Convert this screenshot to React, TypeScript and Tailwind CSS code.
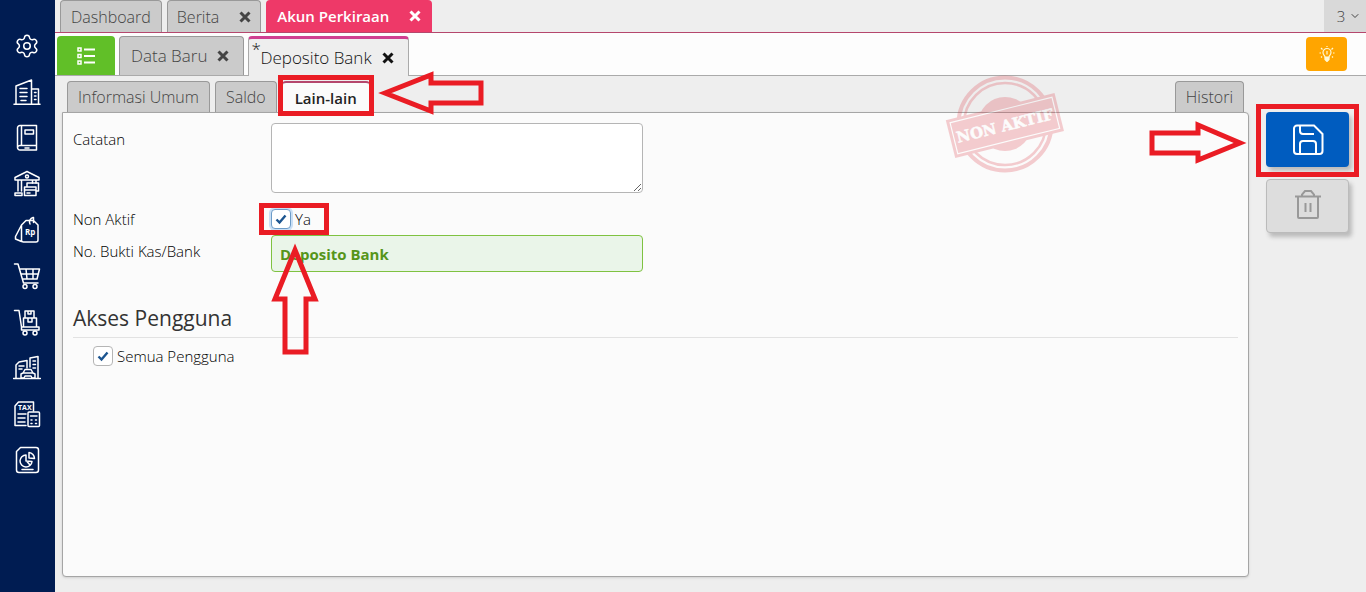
import React, { useState } from 'react';
import { ChevronDown, Settings } from 'lucide-react';

interface IconProps {
  children: React.ReactNode;
}

const MenuIcon: React.FC<IconProps> = ({ children }) => (
  <svg
    viewBox="0 0 28 28"
    className="w-7 h-7"
    fill="none"
    stroke="currentColor"
    strokeWidth="1.5"
    strokeLinecap="round"
    strokeLinejoin="round"
    aria-hidden="true"
  >
    {children}
  </svg>
);

const menuItems = [
  {
    label: 'Pengaturan',
    icon: <Settings className="w-7 h-7 p-px" strokeWidth={1.4} />,
  },
  {
    label: 'Perusahaan',
    icon: (
      <MenuIcon>
        <path d="M3 26V8l15.500-6V26M18.500 11H25.500V26M1 26.200H27" />
        <path d="M7 10.500h7M7 14.500h7M7 18.500h7M8 22.500h5M21.500 14.500h1.500M21.500 18h1.500M21.500 21.500h1.500" />
      </MenuIcon>
    ),
  },
  {
    label: 'Buku Besar',
    icon: (
      <MenuIcon>
        <path d="M7 1.500H23.500V26H7a2.500 2.500 0 0 1-2.500-2.500V4A2.500 2.500 0 0 1 7 1.500ZM4.500 23.500A2.500 2.500 0 0 1 7 21.500H23.500M8.500 2V21" />
        <path d="M12 6h8.500v4H12ZM12 24h4" />
      </MenuIcon>
    ),
  },
  {
    label: 'Kas & Bank',
    icon: (
      <MenuIcon>
        <path d="M2 7.500 14 1.500l12 6V10H2ZM5 10V21M8.500 10V21M19.500 10v3M23 10v3M2 25.500v-2.500h7v2.500Z" />
        <circle cx="14" cy="6.500" r="1.500" />
        <path d="M14 16v-3h11.500v8H24M11.500 17H23v8.500H11.500ZM11.500 20H23M14 23h3" />
      </MenuIcon>
    ),
  },
  {
    label: 'Penjualan',
    icon: (
      <MenuIcon>
        <path d="M13 4.500 8.500 9v15a2 2 0 0 0 2 2H23a2 2 0 0 0 2-2V9l-4.500-4.500ZM8.500 9 2.500 20.500v2.500l6 2.500M17 8c-1.500-3 .5-6 3-6.500M20.500 1.500v5" />
        <text x="12" y="18.500" fill="currentColor" stroke="none" className="text-[8px] font-bold">Rp</text>
      </MenuIcon>
    ),
  },
  {
    label: 'Pembelian',
    icon: (
      <MenuIcon>
        <path d="M1.500 2H5l5.500 19H25M6.500 7H26.500L24 17H9.500M8 12h17.500M13 7l1 10M20 7v10" />
        <circle cx="12" cy="24.500" r="2" />
        <circle cx="22" cy="24.500" r="2" />
      </MenuIcon>
    ),
  },
  {
    label: 'Persediaan',
    icon: (
      <MenuIcon>
        <path d="M1.500 2.500H6L8.500 19H26v3H8.500V19M12 3h9v7h-9ZM15 3v3h3V3M10.500 10h13v9h-13ZM15 10v4h4v-4" />
        <circle cx="12" cy="25" r="2" />
        <circle cx="22" cy="25" r="2" />
      </MenuIcon>
    ),
  },
  {
    label: 'Aset Tetap',
    icon: (
      <MenuIcon>
        <path d="M0.500 24.500h27M3 24V11l3-3 8-1.500V14M17 13V4l8-1.500V24M6 12h5M6 15h3M20 7h2.500M20 10.500h2.500M20 14h2.500" />
        <path d="M8 24v-4l2-1 2-3.500h6l2 3.500 2 1v4h-3l-1-2h-6l-1 2ZM11 19h8" />
      </MenuIcon>
    ),
  },
  {
    label: 'Pajak',
    icon: (
      <MenuIcon>
        <path d="M13 25.500H2V6L5.500 2H20.500V11M5 14h8M5 18h7M5 22h7" />
        <path d="M16 12h9.500a1 1 0 0 1 1 1V25.500a1 1 0 0 1-1 1H16a1 1 0 0 1-1-1V13a1 1 0 0 1 1-1ZM17.500 16H24M18 20h1M22.500 20h1M18 23.500h1M22.500 23.500h1" />
        <text x="5" y="10" fill="currentColor" stroke="none" className="text-[7px] font-bold">TAX</text>
      </MenuIcon>
    ),
  },
  {
    label: 'Laporan',
    icon: (
      <MenuIcon>
        <path d="M7.500 1.500H23A2.500 2.500 0 0 1 25.500 4V24a2.500 2.500 0 0 1-2.500 2.500H6A2.500 2.500 0 0 1 3.500 24V5.500Z" />
        <path d="M13 9a6 6 0 1 0 6 6.500l-6-.5ZM16 6.500V12l5.500.5A6 6 0 0 0 16 6.500ZM13.500 15l3.500 4M9 23.500h11" />
      </MenuIcon>
    ),
  },
];

const CloseMark: React.FC = () => (
  <svg viewBox="0 0 12 12" className="w-3 h-3" stroke="currentColor" strokeWidth="3" aria-hidden="true">
    <path d="M1.500 1.500l9 9M10.500 1.500l-9 9" />
  </svg>
);

interface CheckProps {
  id: string;
  label: string;
  checked: boolean;
  onChange: (value: boolean) => void;
  focused?: boolean;
}

const CheckField: React.FC<CheckProps> = ({ id, label, checked, onChange, focused }) => (
  <div className="flex items-center gap-1">
    <span className="grid">
      <input
        id={id}
        type="checkbox"
        checked={checked}
        onChange={(e) => onChange(e.target.checked)}
        className={`col-start-1 row-start-1 appearance-none w-5 h-5 rounded border bg-white ${
          focused ? 'border-[#6d9cc8] ring-2 ring-[#c9dff5]' : 'border-[#b5b5b5]'
        }`}
      />
      {checked && (
        <svg viewBox="0 0 20 20" className="col-start-1 row-start-1 w-5 h-5 pointer-events-none" fill="none" stroke="#1c5590" strokeWidth="2.400">
          <path d="M5.500 10.500l3 3 6-7" />
        </svg>
      )}
    </span>
    <label htmlFor={id}>{label}</label>
  </div>
);

const HintArrow: React.FC<{ className: string; viewBox: string; points: string }> = ({ className, viewBox, points }) => (
  <svg className={`absolute z-10 pointer-events-none ${className}`} viewBox={viewBox} fill="none" stroke="#ea1c24" strokeWidth="5" aria-hidden="true">
    <polygon points={points} />
  </svg>
);

const Stamp: React.FC = () => (
  <svg className="absolute right-[184px] -top-2 w-30 h-[102px] opacity-25" viewBox="0 0 120 102" aria-hidden="true">
    <g fill="none" stroke="#dc3f4b">
      <circle cx="60" cy="51" r="46.500" strokeWidth="4" />
      <circle cx="60" cy="51" r="41" strokeWidth="2.500" />
    </g>
    <circle cx="60" cy="51" r="27" fill="#dc3f4b" />
    <g transform="rotate(-14 60 53)">
      <rect x="4" y="33" width="112" height="39" fill="#dc3f4b" />
      <rect x="7.500" y="36.500" width="105" height="32" fill="none" stroke="#fff" strokeWidth="1.200" />
      <text x="60" y="58" textAnchor="middle" fill="#fff" stroke="#fff" strokeWidth=".5" className="text-[15px] font-bold font-['DejaVu_Serif',serif]">
        NON AKTIF
      </text>
    </g>
  </svg>
);

const tabClass = 'flex items-center rounded-t border border-b-0 border-[#999] bg-[#cbcbcb] text-[#444]';

const App: React.FC = () => {
  const [note, setNote] = useState('');
  const [inactive, setInactive] = useState(true);
  const [allUsers, setAllUsers] = useState(true);

  return (
    <div className="flex min-h-screen bg-[#eee] font-['Open_Sans','Noto_Sans',sans-serif] text-[15px] leading-5 font-light text-black">
      {/* Sidebar */}
      <nav className="w-[55px] shrink-0 bg-[#001c52] text-white flex flex-col items-center gap-[18px] pt-8 pr-0.5">
        {menuItems.map((item) => (
          <button key={item.label} aria-label={item.label}>
            {item.icon}
          </button>
        ))}
      </nav>

      <div className="flex-1 min-w-0 flex flex-col">
        {/* Module tabs */}
        <header className="flex h-[33px] gap-[5px] pl-[5px] border-b border-[#b5476d]">
          <button className={`${tabClass} px-2.5 text-base`}>Dashboard</button>
          <div className={`${tabClass} gap-5 px-[9px] text-base`}>
            <button>Berita</button>
            <button aria-label="Tutup Berita"><CloseMark /></button>
          </div>
          <div className="flex items-center gap-5 rounded-t bg-[#ee3968] px-[11px] text-white font-semibold">
            <button>Akun Perkiraan</button>
            <button aria-label="Tutup Akun Perkiraan"><CloseMark /></button>
          </div>
          <button className="ml-auto w-[42px] flex items-center justify-center gap-1 pl-2 bg-[#d9d9d9] text-[#444]">
            3
            <ChevronDown className="w-3 h-3" strokeWidth={2} />
          </button>
        </header>

        {/* Record tabs */}
        <div className="flex h-[43px] pl-0.5 pr-[19px] pt-[3px] gap-1 bg-[#fdfdfd] border-b border-[#aaa] text-[17px]">
          <button aria-label="Daftar" className="w-[58px] flex items-center justify-center rounded-t bg-[#61bf28] text-white">
            <svg viewBox="0 0 20 20" className="w-5 h-5" fill="none" stroke="currentColor" strokeWidth="1.500">
              <path d="M2 2h3v3H2ZM2 8.500h3v3H2ZM2 15h3v3H2Z" />
              <path d="M8 3.500h11M8 10h11M8 16.500h11" strokeWidth="2" />
            </svg>
          </button>
          <div className={`${tabClass} gap-2.5 pl-[11px] pr-3.5`}>
            <button>Data Baru</button>
            <button aria-label="Tutup Data Baru"><CloseMark /></button>
          </div>
          <div className="relative flex items-center gap-2.5 pl-[11px] pr-3.5 -mb-px rounded-t border-x border-t-3 border-x-[#aaa] border-t-[#cf3f91] bg-[#eee] text-[#111]">
            <span className="absolute left-0.5 top-0">*</span>
            <button>Deposito Bank</button>
            <button aria-label="Tutup Deposito Bank"><CloseMark /></button>
          </div>
          <button aria-label="Petunjuk" className="ml-auto w-[41px] h-[34px] mt-px flex items-center justify-center rounded bg-[#ffa500] text-[#fff9d8]">
            <svg viewBox="0 0 16 16" className="w-4 h-4" fill="none" stroke="currentColor" strokeWidth="1.200">
              <path d="M6 11c0-1.500-2-2-2-4.500a4 4 0 0 1 8 0C12 9 10 9.500 10 11ZM8 5v3.500M8 1V0M2 2l1.500 1.500M14 2l-1.500 1.500M0.500 7H2M14 7h1.500M2 11.500l1-1M14 11.500l-1-1" />
              <path d="M6 11.500h4v2l-2 2-2-2Z" fill="currentColor" />
            </svg>
          </button>
        </div>

        <main className="flex-1 flex gap-[17px] pl-[7px] pr-[17px] pt-[5px] pb-[15px]">
          <section className="relative flex-1 min-w-0 flex flex-col">
            {/* Section tabs */}
            <div role="tablist" className="flex h-[31px] gap-[5px] px-[5px]">
              <button role="tab" className={`${tabClass} px-2.5 text-base`}>Informasi Umum</button>
              <button role="tab" className={`${tabClass} px-2.5 text-base`}>Saldo</button>
              <div className="relative flex">
                <button role="tab" aria-selected="true" className="relative z-1 -mb-px px-3 rounded-t border-x border-t-2 border-x-[#aaa] border-t-[#b5476d] bg-[#fbfbfb] font-semibold text-[#222]">
                  Lain-lain
                </button>
                <span className="absolute z-10 -inset-x-1 -top-1.5 -bottom-1 border-5 border-[#ea1c24] pointer-events-none" />
                <HintArrow className="left-full ml-2 -top-2.5 w-[108px] h-[44px]" viewBox="0 0 108 44" points="7,22 53,4 53,12 103,12 103,32 53,32 53,40" />
              </div>
              <button role="tab" className={`${tabClass} px-2.5 ml-auto text-base`}>Histori</button>
            </div>

            {/* Form panel */}
            <div className="flex-1 flex flex-col rounded-b rounded-tr border border-[#a5a5a5] bg-[#fbfbfb] px-2.5 pt-2.5 shadow-sm">
              <div className="flex">
                <label htmlFor="note" className="w-[198px] shrink-0 pt-1.5">Catatan</label>
                <textarea
                  id="note"
                  value={note}
                  onChange={(e) => setNote(e.target.value)}
                  className="w-[372px] h-[70px] rounded border border-[#b5b5b5] bg-white px-2 py-1"
                />
              </div>
              <div className="flex mt-4">
                <span className="w-[198px] shrink-0">Non Aktif</span>
                <div className="relative">
                  <CheckField id="inactive" label="Ya" checked={inactive} onChange={setInactive} focused />
                  <span className="absolute z-10 -left-3 -right-[18px] -inset-y-1.5 border-5 border-[#ea1c24] pointer-events-none" />
                  <HintArrow className="left-0 top-[34px] w-12 h-[114px]" viewBox="0 0 48 114" points="24,7 44,56 35,56 35,109 14,109 14,56 4,56" />
                </div>
              </div>
              <div className="flex mt-1.5">
                <label htmlFor="proof" className="w-[198px] shrink-0 pt-1.5">No. Bukti Kas/Bank</label>
                <input
                  id="proof"
                  defaultValue="Deposito Bank"
                  className="w-[372px] h-[37px] rounded border border-[#7fc241] bg-[#eaf5e9] px-2 font-bold text-[#56951a]"
                />
              </div>
              <h2 className="mt-8 pb-[5px] border-b border-[#e2e2e2] text-[21px] leading-7 font-normal text-[#333]">Akses Pengguna</h2>
              <div className="pl-5 pt-2">
                <CheckField id="all-users" label="Semua Pengguna" checked={allUsers} onChange={setAllUsers} />
              </div>
            </div>
            <Stamp />
            <HintArrow className="right-0.5 top-[38px] w-[98px] h-12" viewBox="0 0 98 48" points="3,14 49,14 49,6 91,24 49,41 49,34 3,34" />
          </section>

          {/* Actions */}
          <aside className="w-[83px] shrink-0 flex flex-col gap-3 pt-[31px]">
            <div className="relative">
              <button aria-label="Simpan" className="w-full h-[55px] flex items-center justify-center rounded bg-[#005cbf] text-white shadow-[3px_4px_4px_#bbb]">
                <svg viewBox="0 0 32 32" className="w-8 h-8" fill="none" stroke="currentColor" strokeWidth="2">
                  <path d="M5 1.500H22L30.500 10V27a3 3 0 0 1-3 3H5a3 3 0 0 1-3-3V4.500a3 3 0 0 1 3-3ZM8 2v5a3 3 0 0 0 3 3H22M8 30V20a3 3 0 0 1 3-3H21a3 3 0 0 1 3 3V30" />
                </svg>
              </button>
              <span className="absolute -inset-x-2.5 -top-2 -bottom-2.5 border-5 border-[#ea1c24] pointer-events-none" />
            </div>
            <button aria-label="Hapus" className="h-[54px] flex items-center justify-center rounded border border-[#bbb] bg-[#ddd] pb-1 text-[#999] shadow-[3px_4px_4px_#bbb]">
              <svg viewBox="0 0 28 32" className="w-7 h-8" fill="none" stroke="currentColor" strokeWidth="2">
                <path d="M1 8.500H27M8 8V6.500L11 3h6l3 3.500V8M4 9V29a1 1 0 0 0 1 1H23a1 1 0 0 0 1-1V9M11.500 15v9M16.500 15v9" />
              </svg>
            </button>
          </aside>
        </main>
      </div>
    </div>
  );
};

export default App;
